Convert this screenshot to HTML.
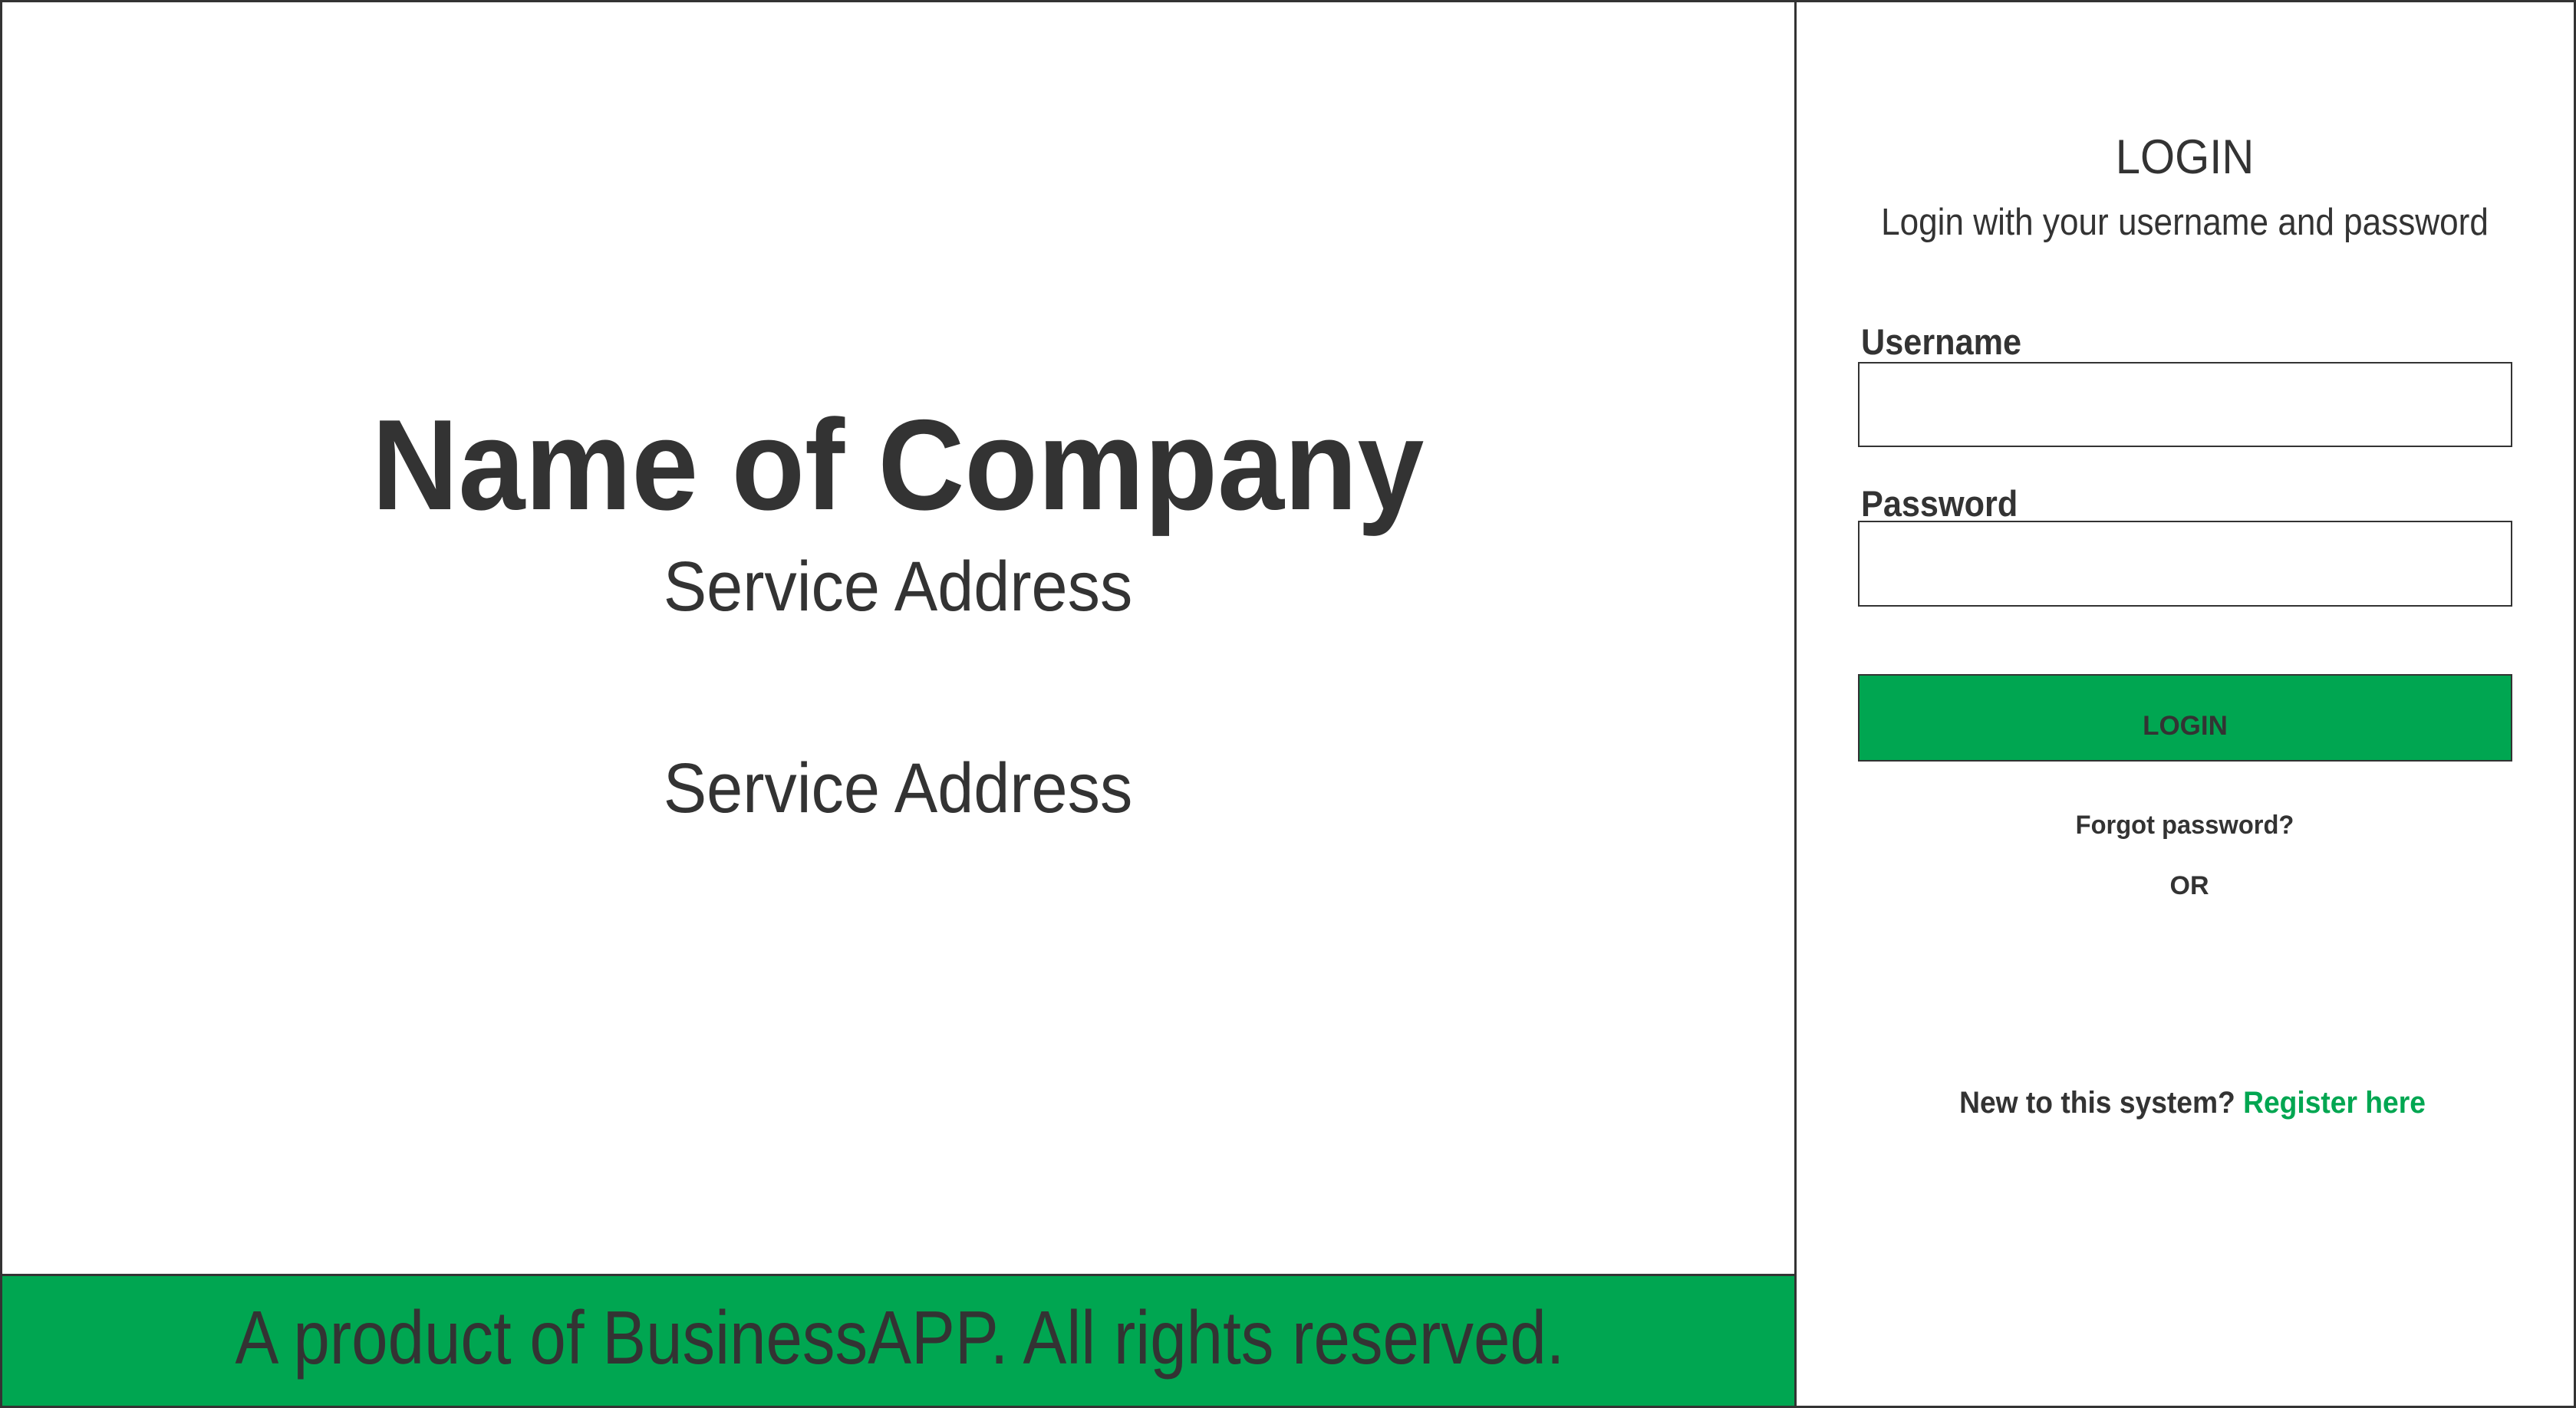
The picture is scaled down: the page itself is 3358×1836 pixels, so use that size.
<!DOCTYPE html>
<html><head><meta charset="utf-8"><style>
html,body{margin:0;padding:0;background:#fff}
body{width:3358px;height:1836px;position:relative;overflow:hidden;font-family:"Liberation Sans",Arial,sans-serif;color:#333}
.t{position:absolute;white-space:nowrap;line-height:1;text-align:center}
.frame{position:absolute;left:0;top:0;width:3352px;height:1830px;border:3px solid #333;z-index:5}
</style></head><body>
<div class="frame"></div>
<div style="position:absolute;left:2339px;top:0;width:3px;height:1836px;background:#333;z-index:5"></div>
<div style="position:absolute;left:0;top:1661px;width:2341px;height:175px;background:#00a651;border-top:3px solid #333;box-sizing:border-box"></div>

<div class="t" style="left:0;width:2341px;top:522px;font-size:168px;font-weight:bold;transform:scaleX(0.93)">Name of Company</div>
<div class="t" style="left:0;width:2341px;top:719px;font-size:92px;transform:scaleX(0.92)">Service Address</div>
<div class="t" style="left:0;width:2341px;top:982px;font-size:92px;transform:scaleX(0.92)">Service Address</div>
<div class="t" style="left:0;width:2346px;top:1695px;font-size:98px;transform:scaleX(0.87)">A product of BusinessAPP. All rights reserved.</div>

<div class="t" style="left:2342px;width:1012px;top:174px;font-size:63px;transform:scaleX(0.92)">LOGIN</div>
<div class="t" style="left:2342px;width:1012px;top:266px;font-size:49px;transform:scaleX(0.9)">Login with your username and password</div>

<div class="t" style="left:2426px;top:422px;font-size:47px;font-weight:bold;text-align:left;transform:scaleX(0.92);transform-origin:left">Username</div>
<div style="position:absolute;left:2422px;top:472px;width:853px;height:111px;border:2px solid #333;box-sizing:border-box"></div>
<div class="t" style="left:2426px;top:633px;font-size:47px;font-weight:bold;text-align:left;transform:scaleX(0.92);transform-origin:left">Password</div>
<div style="position:absolute;left:2422px;top:679px;width:853px;height:112px;border:2px solid #333;box-sizing:border-box"></div>

<div style="position:absolute;left:2422px;top:879px;width:853px;height:114px;background:#00a651;border:2px solid #333;box-sizing:border-box"></div>
<div class="t" style="left:2422px;width:853px;top:929px;font-size:35px;font-weight:bold;transform:scaleX(1.0)">LOGIN</div>

<div class="t" style="left:2342px;width:1012px;top:1059px;font-size:34px;font-weight:bold;transform:scaleX(0.96)">Forgot password?</div>
<div class="t" style="left:2354px;width:1000px;top:1138px;font-size:34px;font-weight:bold">OR</div>
<div class="t" style="left:2352px;width:1012px;top:1418px;font-size:40px;font-weight:bold;transform:scaleX(0.93)">New to this system? <span style="color:#00a651">Register here</span></div>
</body></html>
